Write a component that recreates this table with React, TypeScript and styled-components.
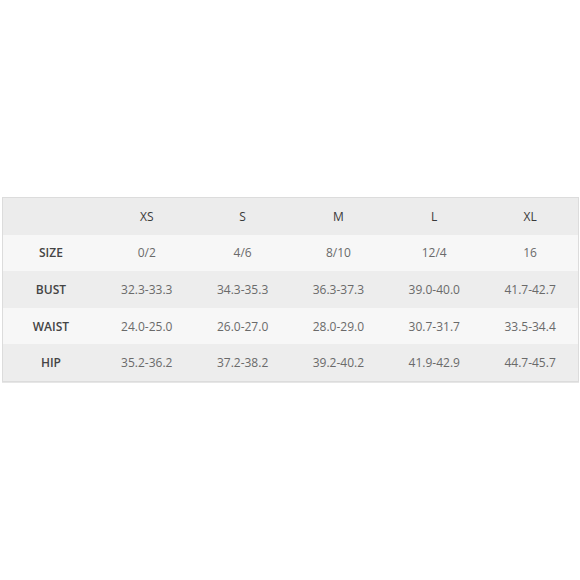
import styled, { createGlobalStyle } from "styled-components";

const sizes = ["XS", "S", "M", "L", "XL"];

const rows = [
    { label: "SIZE", values: ["0/2", "4/6", "8/10", "12/4", "16"] },
    { label: "BUST", values: ["32.3-33.3", "34.3-35.3", "36.3-37.3", "39.0-40.0", "41.7-42.7"] },
    { label: "WAIST", values: ["24.0-25.0", "26.0-27.0", "28.0-29.0", "30.7-31.7", "33.5-34.4"] },
    { label: "HIP", values: ["35.2-36.2", "37.2-38.2", "39.2-40.2", "41.9-42.9", "44.7-45.7"] },
];

function App(){
    return(
        <>
        <GlobalSld />
        <PageSld>
            <TableSld>
                <RowSld $shade="head">
                    <CellSld />
                    {sizes.map(s => <HeadCellSld key={s}>{s}</HeadCellSld>)}
                </RowSld>
                {rows.map((r, i) => (
                    <RowSld key={r.label} $shade={i % 2 === 0 ? "light" : "dark"}>
                        <LabelSld>{r.label}</LabelSld>
                        {r.values.map((v, j) => <CellSld key={j}>{v}</CellSld>)}
                    </RowSld>
                ))}
            </TableSld>
        </PageSld>
        </>
    )
}

const GlobalSld = createGlobalStyle`
    body {
        margin: 0;
        background: #ffffff;
        font-family: "Open Sans", "Liberation Sans", sans-serif;
    }
`;

const PageSld = styled.div`
    width: 580px;
    height: 580px;
    padding: 197px 0 0 2px;
    box-sizing: border-box;
`;

const TableSld = styled.div`
    width: 577px;
    border: 1px solid #dcdcdc;
    box-shadow: 0 1px 0 #e6e6e6;
    box-sizing: border-box;
`;

const RowSld = styled.div<{ $shade: "head" | "light" | "dark" }>`
    display: grid;
    grid-template-columns: repeat(6, 1fr);
    height: 36.6px;
    align-items: center;
    background: ${p => p.$shade === "head" ? "#ececec" : p.$shade === "light" ? "#f7f7f7" : "#ededed"};
`;

const CellSld = styled.div`
    text-align: center;
    font-size: 12px;
    color: #6a6a6a;
`;

const HeadCellSld = styled(CellSld)`
    color: #3a3a3a;
    font-weight: 400;
`;

const LabelSld = styled(CellSld)`
    color: #444444;
    font-weight: 600;
`;

export default App;
